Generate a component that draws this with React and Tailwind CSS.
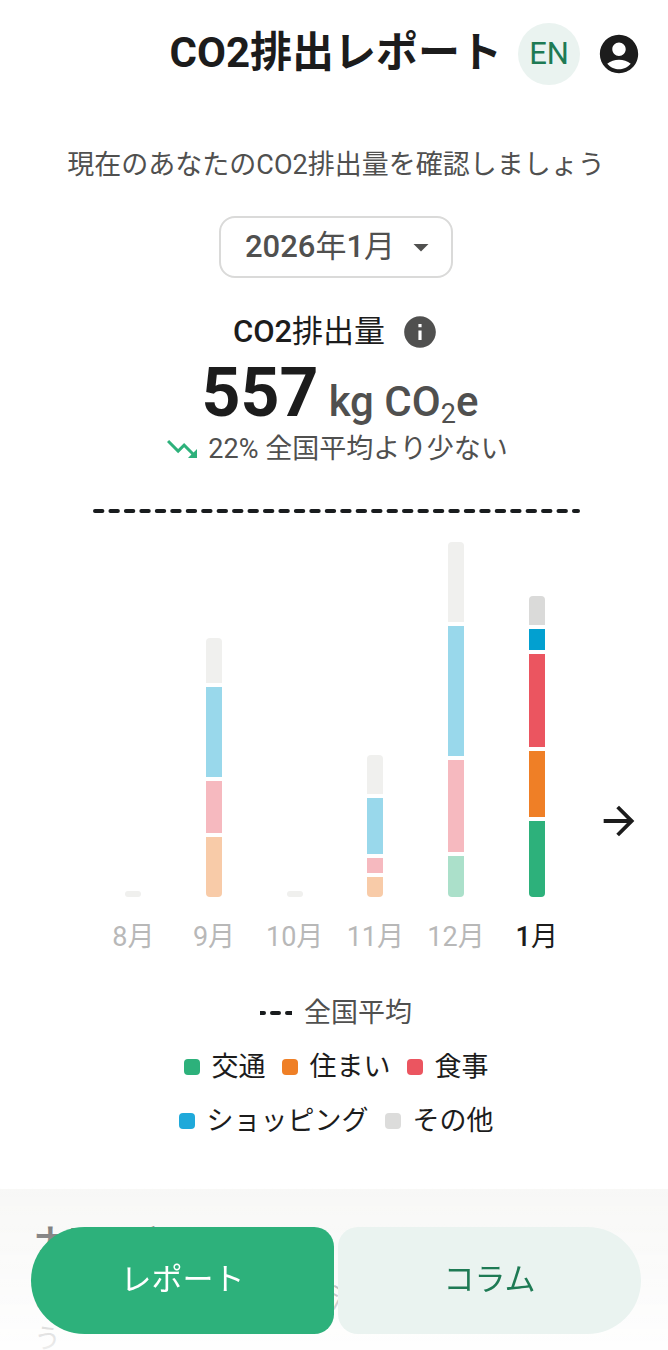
import {
  MdAccountCircle,
  MdArrowDropDown,
  MdArrowForward,
  MdInfo,
  MdTrendingDown,
} from 'react-icons/md';

const COLORS = {
  transport: { solid: 'bg-[#2db17b]', faded: 'bg-[#abe0ca]' },
  housing: { solid: 'bg-[#ef7f26]', faded: 'bg-[#f8cba8]' },
  food: { solid: 'bg-[#eb5560]', faded: 'bg-[#f6b9bf]' },
  shopping: { solid: 'bg-[#02a0d0]', faded: 'bg-[#99d8eb]' },
  other: { solid: 'bg-[#dadad9]', faded: 'bg-[#f0f0ee]' },
};

// segments run from the top of the bar to the bottom
const MONTHS = [
  { month: 8, segments: [] },
  {
    month: 9,
    segments: [
      ['other', 45],
      ['shopping', 90],
      ['food', 52],
      ['housing', 60],
    ],
  },
  { month: 10, segments: [] },
  {
    month: 11,
    segments: [
      ['other', 39],
      ['shopping', 56],
      ['food', 15],
      ['housing', 20],
    ],
  },
  {
    month: 12,
    segments: [
      ['other', 80],
      ['shopping', 130],
      ['food', 92],
      ['transport', 41],
    ],
  },
  {
    month: 1,
    active: true,
    segments: [
      ['other', 29],
      ['shopping', 21],
      ['food', 93],
      ['housing', 66],
      ['transport', 76],
    ],
  },
];

const LEGEND = [
  [
    { label: '交通', color: 'bg-[#2db17b]' },
    { label: '住まい', color: 'bg-[#ef7f26]' },
    { label: '食事', color: 'bg-[#eb5560]' },
  ],
  [
    { label: 'ショッピング', color: 'bg-[#1fa9da]' },
    { label: 'その他', color: 'bg-[#dcdcdb]' },
  ],
];

function Bar({ segments, active }) {
  if (segments.length === 0) {
    return <div className="h-[6px] w-4 rounded-full bg-[#f0f0ee]" />;
  }

  return (
    <div className="flex w-4 flex-col gap-1 overflow-hidden rounded">
      {segments.map(([key, height]) => (
        <div
          key={key}
          className={active ? COLORS[key].solid : COLORS[key].faded}
          style={{ height }}
        />
      ))}
    </div>
  );
}

function Chart() {
  return (
    <section className="relative mt-10 pr-[91px] pl-[89px]">
      <svg className="block h-1 w-full overflow-visible" aria-hidden="true">
        <line
          x1="2"
          y1="2"
          x2="485"
          y2="2"
          stroke="#191c1e"
          strokeWidth="4"
          strokeLinecap="round"
          strokeDasharray="7.4 8.05"
        />
      </svg>

      <div className="flex h-96 items-end">
        {MONTHS.map(({ month, segments, active }) => (
          <div key={month} className="flex flex-1 justify-center">
            <Bar segments={segments} active={active} />
          </div>
        ))}
      </div>

      <div className="mt-5 flex">
        {MONTHS.map(({ month, active }) => (
          <span
            key={month}
            className={`flex-1 text-center text-[27px] leading-10 whitespace-nowrap ${
              active ? 'text-[#1c1c1c]' : 'text-[#b8b8b8]'
            }`}
          >
            <span className={active ? 'font-medium' : ''}>{month}</span>月
          </span>
        ))}
      </div>

      <button
        type="button"
        aria-label="次へ"
        className="absolute right-[26px] bottom-[113px] text-[#1c1c1c]"
      >
        <MdArrowForward className="size-[46px]" />
      </button>
    </section>
  );
}

export default function App() {
  return (
    <div className="flex h-dvh flex-col overflow-hidden bg-white font-['Roboto','Noto_Sans_CJK_JP',sans-serif] text-[#1c1c1c]">
      <header className="flex h-[108px] shrink-0 items-center justify-end pr-[26px]">
        <h1 className="pb-1 text-[42px] font-bold whitespace-nowrap">
          CO2排出レポート
        </h1>
        <button
          type="button"
          className="ml-4 size-[62px] rounded-full bg-[#eaf3f0] text-[31px] text-[#1e7a54]"
        >
          EN
        </button>
        <button type="button" aria-label="アカウント" className="ml-4">
          <MdAccountCircle className="size-[46px]" />
        </button>
      </header>

      <main className="shrink-0 pl-1">
        <p className="mt-9 text-center text-[27px] leading-[42px] text-[#50504f]">
          現在のあなたのCO2排出量を確認しましょう
        </p>

        <div className="mt-[30px] flex justify-center">
          <button
            type="button"
            className="flex h-[62px] items-center rounded-2xl border-2 border-[#dadad9] pr-3 pl-6 text-[31px] text-[#50504f]"
          >
            <span>
              <span className="font-medium">2026</span>年
              <span className="font-medium">1</span>月
            </span>
            <MdArrowDropDown className="ml-2 size-9" />
          </button>
        </div>

        <div className="mt-8 mb-3 flex items-center justify-center gap-4">
          <h2 className="text-[31px] leading-11">
            <span className="font-medium">CO2</span>排出量
          </h2>
          <MdInfo className="size-[38px] text-[#50504f]" />
        </div>

        <p className="flex items-baseline justify-center gap-[10px] pl-2 leading-[54px]">
          <span className="text-[68px] font-bold">557</span>
          <span className="text-[42px] font-medium text-[#50504f]">
            kg CO
            <sub className="text-[27px] leading-none font-normal">2</sub>e
          </span>
        </p>

        <p className="flex items-center justify-center gap-2 text-[27px] leading-10 text-[#50504f]">
          <MdTrendingDown className="size-9 text-[#2db17b]" />
          22% 全国平均より少ない
        </p>

        <Chart />

        <div className="mt-9 flex items-center justify-center gap-3 text-[27px] leading-10 text-[#50504f]">
          <svg className="h-1 w-8" viewBox="0 0 32 4" aria-hidden="true">
            <path
              d="M0 2h4M12 2h7M27 2h5"
              stroke="#191c1e"
              strokeWidth="4"
              strokeLinecap="round"
            />
          </svg>
          全国平均
        </div>

        <ul className="mt-[14px] flex flex-col gap-[14px]">
          {LEGEND.map((row) => (
            <li key={row[0].label} className="flex justify-center gap-4">
              {row.map((item) => (
                <span
                  key={item.label}
                  className="flex items-center gap-3 text-[27px] leading-10"
                >
                  <span className={`size-4 rounded ${item.color}`} />
                  {item.label}
                </span>
              ))}
            </li>
          ))}
        </ul>
      </main>

      <section className="mt-12 flex-1 bg-[#f5f5f3] px-[34px] pt-[30px]">
        <h2 className="text-[31px] leading-11 font-bold">ナレッジ</h2>
        <p className="mt-4 text-[27px] leading-10 text-[#50504f]">
          あなたの暮らしに合った活動を見つけてみましょう
        </p>
      </section>

      <nav className="fixed inset-x-0 bottom-0 flex h-[162px] gap-1 bg-linear-to-b from-white/30 to-white/90 pt-[39px] pr-[27px] pb-4 pl-[31px] text-[31px]">
        <button
          type="button"
          className="flex-1 rounded-l-[54px] rounded-r-[20px] bg-[#2db17b] text-white"
        >
          レポート
        </button>
        <button
          type="button"
          className="flex-1 rounded-l-[20px] rounded-r-[54px] bg-[#eaf3f0] text-[#1e7a54]"
        >
          コラム
        </button>
      </nav>
    </div>
  );
}
